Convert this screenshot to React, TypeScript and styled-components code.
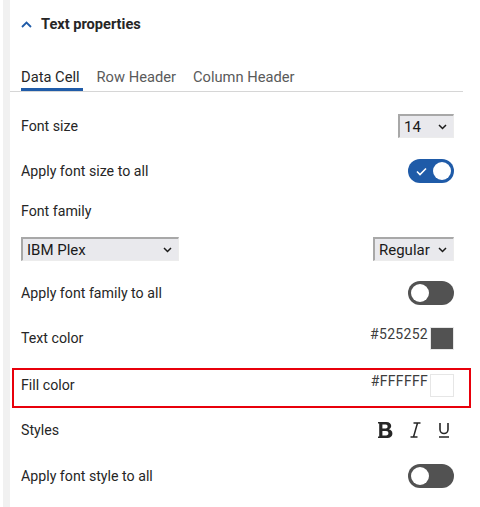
import React from "react";
import styled, { createGlobalStyle } from "styled-components";

const Global = createGlobalStyle`
  html, body { margin: 0; padding: 0; background: #ffffff; }
  body { font-family: Roboto, "Noto Sans", "Liberation Sans", sans-serif; color: #262626; }
  * { box-sizing: border-box; }
`;

const BLUE = "#1f5ba8";

const Page = styled.div`
  display: flex;
  min-height: 507px;
`;

const SideStrip = styled.div`
  width: 7px;
  margin-left: 3px;
  background: #f1f1f1;
  flex: none;
`;

const Panel = styled.div`
  width: 453px;
  display: flex;
  flex-direction: column;
`;

const Header = styled.div`
  height: 48px;
  display: flex;
  align-items: center;
  gap: 9px;
  padding-left: 11px;
`;

const Title = styled.span`
  font-size: 14.6px;
  font-weight: 700;
  color: #262626;
`;

const TabList = styled.div`
  margin-top: 14px;
  height: 30px;
  display: flex;
  gap: 14px;
  padding-left: 11px;
  border-bottom: 1px solid #d6d6d6;
`;

const Tab = styled.div<{ $active?: boolean }>`
  height: 29px;
  padding: 7px 3px 0 0;
  font-size: 14.7px;
  line-height: 16px;
  color: ${(p) => (p.$active ? "#262626" : "#5a5a5a")};
  border-bottom: 3px solid ${(p) => (p.$active ? BLUE : "transparent")};
`;

const Body = styled.div`
  padding: 12px 9px 0 11px;
  display: flex;
  flex-direction: column;
`;

const Row = styled.div<{ $h: number }>`
  position: relative;
  height: ${(p) => p.$h}px;
  display: flex;
  align-items: center;
  justify-content: space-between;
`;

const Highlight = styled.div`
  position: absolute;
  left: -9px;
  right: -17px;
  top: 8px;
  bottom: 2px;
  border: 2px solid #e8000b;
  pointer-events: none;
`;

const Label = styled.span`
  font-size: 14.2px;
  line-height: 16px;
  color: #262626;
`;

const SelectWrap = styled.div<{ $w: number }>`
  position: relative;
  width: ${(p) => p.$w}px;
  height: 24px;
`;

const NativeSelect = styled.select`
  appearance: none;
  -webkit-appearance: none;
  width: 100%;
  height: 100%;
  margin: 0;
  padding: 0 18px 0 4px;
  font-family: Roboto, "Noto Sans", sans-serif;
  font-size: 15px;
  color: #1a1a1a;
  background: #e9e9ed;
  border-style: solid;
  border-width: 2px 1px 1px 2px;
  border-color: #a8a8a8 #ececec #ececec #a8a8a8;
  border-radius: 0;
  outline: none;
`;

const Chevron = styled.svg`
  position: absolute;
  right: 7px;
  top: 10px;
  pointer-events: none;
`;

const Toggle = styled.div<{ $on?: boolean }>`
  position: relative;
  width: 46px;
  height: 24px;
  border-radius: 12px;
  background: ${(p) => (p.$on ? BLUE : "#525252")};
  flex: none;
`;

const Knob = styled.div<{ $on?: boolean }>`
  position: absolute;
  top: 3px;
  left: ${(p) => (p.$on ? "25px" : "3px")};
  width: 18px;
  height: 18px;
  border-radius: 50%;
  background: #ffffff;
`;

const Check = styled.svg`
  position: absolute;
  left: 8px;
  top: 8px;
`;

const ColorValue = styled.div`
  display: flex;
  align-items: flex-start;
  gap: 2px;
`;

const Hex = styled.span`
  font-family: Roboto, "Liberation Sans", sans-serif;
  font-size: 14px;
  line-height: 14px;
  color: #3d3d3d;
  letter-spacing: 0.3px;
`;

const Swatch = styled.div<{ $c: string }>`
  width: 24px;
  height: 23px;
  background: ${(p) => p.$c};
  border: 1px solid #e6e6e6;
`;

const StyleButtons = styled.div`
  display: flex;
  align-items: center;
  gap: 17px;
  margin-right: 4px;
`;

const IconBtn = styled.svg`
  display: block;
  color: #262626;
`;

function Select({ w, value }: { w: number; value: string }) {
  return (
    <SelectWrap $w={w}>
      <NativeSelect defaultValue={value}>
        <option value={value}>{value}</option>
      </NativeSelect>
      <Chevron width="9" height="6" viewBox="0 0 9 6">
        <path d="M1 1 L4.5 4.5 L8 1" fill="none" stroke="#1a1a1a" strokeWidth="1.5" />
      </Chevron>
    </SelectWrap>
  );
}

function Switch({ on }: { on?: boolean }) {
  return (
    <Toggle $on={on}>
      {on && (
        <Check width="11" height="9" viewBox="0 0 11 9">
          <path d="M1 4.5 L4 7.5 L10 1.5" fill="none" stroke="#ffffff" strokeWidth="1.6" />
        </Check>
      )}
      <Knob $on={on} />
    </Toggle>
  );
}

export default function App() {
  return (
    <>
      <Global />
      <Page>
        <SideStrip />
        <Panel>
          <Header>
            <svg width="11" height="7" viewBox="0 0 11 7">
              <path d="M1 6 L5.5 1.5 L10 6" fill="none" stroke={BLUE} strokeWidth="1.8" />
            </svg>
            <Title>Text properties</Title>
          </Header>
          <TabList>
            <Tab $active>Data Cell</Tab>
            <Tab>Row Header</Tab>
            <Tab>Column Header</Tab>
          </TabList>
          <Body>
            <Row $h={44}>
              <Label>Font size</Label>
              <Select w={56} value="14" />
            </Row>
            <Row $h={46}>
              <Label>Apply font size to all</Label>
              <Switch on />
            </Row>
            <Row $h={34}>
              <Label>Font family</Label>
            </Row>
            <Row $h={42}>
              <Select w={158} value="IBM Plex" />
              <Select w={81} value="Regular" />
            </Row>
            <Row $h={46}>
              <Label>Apply font family to all</Label>
              <Switch />
            </Row>
            <Row $h={44}>
              <Label>Text color</Label>
              <ColorValue>
                <Hex>#525252</Hex>
                <Swatch $c="#525252" />
              </ColorValue>
            </Row>
            <Row $h={50}>
              <Label>Fill color</Label>
              <ColorValue>
                <Hex>#FFFFFF</Hex>
                <Swatch $c="#ffffff" />
              </ColorValue>
              <Highlight />
            </Row>
            <Row $h={40}>
              <Label>Styles</Label>
              <StyleButtons>
                <IconBtn width="15" height="16" viewBox="0 0 15 16">
                  <path
                    fillRule="evenodd"
                    fill="currentColor"
                    d="M0 0 H8.2 C11.6 0 13.2 1.8 13.2 4 C13.2 5.6 12.2 6.8 10.8 7.3 C12.8 7.8 14.4 9.2 14.4 11.4 C14.4 14.2 12.2 16 8.7 16 H0 V14.6 H1.2 V1.4 H0 Z M4.4 2.6 H7.7 C9 2.6 9.6 3.4 9.6 4.6 C9.6 5.8 9 6.5 7.7 6.5 H4.4 Z M4.4 9.1 H8.1 C9.6 9.1 10.4 10 10.4 11.3 C10.4 12.6 9.6 13.4 8.1 13.4 H4.4 Z"
                  />
                </IconBtn>
                <IconBtn width="11" height="16" viewBox="0 0 11 16">
                  <path
                    d="M3.5 1 H10.5 M0.5 15 H7.5 M7.5 1 L3.5 15"
                    fill="none"
                    stroke="currentColor"
                    strokeWidth="1.5"
                  />
                </IconBtn>
                <IconBtn width="12" height="16" viewBox="0 0 12 16">
                  <path
                    d="M2 1 V7.5 A4 4 0 0 0 10 7.5 V1 M1 15 H11"
                    fill="none"
                    stroke="currentColor"
                    strokeWidth="1.6"
                  />
                </IconBtn>
              </StyleButtons>
            </Row>
            <Row $h={52}>
              <Label>Apply font style to all</Label>
              <Switch />
            </Row>
          </Body>
        </Panel>
      </Page>
    </>
  );
}
